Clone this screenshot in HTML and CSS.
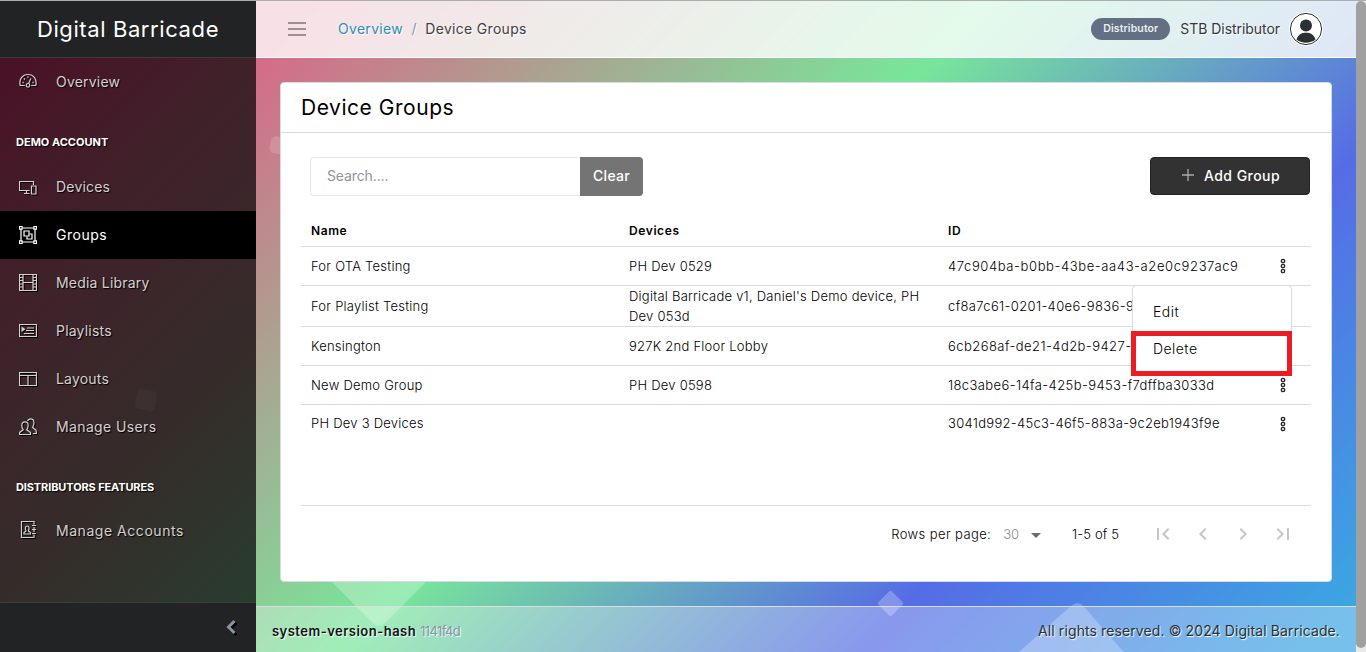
FILE: index.html
```html
<!DOCTYPE html>
<html lang="en">
<head>
<meta charset="utf-8">
<title>Device Groups</title>
<link rel="stylesheet" href="styles.css">
</head>
<body>
<div class="app">
  <div class="shapes">
    <span class="shape shape-a"></span>
    <span class="shape shape-b"></span>
    <span class="shape shape-c"></span>
    <span class="shape shape-d"></span>
  </div>

  <aside class="sidebar">
    <div class="brand">Digital Barricade</div>
    <nav class="nav">
      <a class="nav-item overview"><svg class="icon" viewBox="0 0 18 18"><path d="M5.800 13.500H1.200C-.3 7.200 3.500 2.500 9 2.500s9.300 4.700 7.800 11h-4.600"/><circle cx="9" cy="13.300" r="1.800"/><path d="M9.600 11.500l2.200-5"/><path class="dots" d="M3.500 10.500h1.200M4.800 7h1.200M8.400 5h1.200M13.500 10.500h1.200"/></svg><span>Overview</span></a>
      <div class="nav-title">DEMO ACCOUNT</div>
      <a class="nav-item"><svg class="icon" viewBox="0 0 18 18"><path d="M10.500 12.500h-10v-9h14v3.500M5 15.500h5.500M7.500 12.500v3"/><path d="M12.500 8h4.500v8h-4.500z"/></svg><span>Devices</span></a>
      <a class="nav-item active"><svg class="icon" viewBox="0 0 18 18"><path d="M3 2h12M3 16h12M2 3v12M16 3v12"/><path class="corner" d="M.5.5h2.600v2.600H.5zM14.900.5h2.600v2.600h-2.600zM.5 14.900h2.600v2.600H.5zM14.900 14.900h2.600v2.600h-2.600z"/><path d="M5 5h5v5H5z"/><path d="M10.500 8H13v5H8v-2.500"/></svg><span>Groups</span></a>
      <a class="nav-item"><svg class="icon" viewBox="0 0 18 18"><path d="M.5.5h17v16H.5zM4 .5v16M14 .5v16M4 8.500h10M.5 3.500H4M.5 6.500H4M.5 10H4M.5 13H4M14 3.500h3.500M14 6.500h3.500M14 10h3.500M14 13h3.500"/></svg><span>Media Library</span></a>
      <a class="nav-item playlists"><svg class="icon" viewBox="0 0 18 18"><path d="M.5 2.500h17v12H.5zM8 6h7M7 8.500h8M5 11.500h10"/><path class="solid" d="M2.500 4.500l4 2.700-4 2.700z"/></svg><span>Playlists</span></a>
      <a class="nav-item"><svg class="icon" viewBox="0 0 18 18"><path d="M.5 2.500h17v13H.5zM.5 5.500h17M9 5.500v10"/></svg><span>Layouts</span></a>
      <a class="nav-item users"><svg class="icon" viewBox="0 0 18 18"><path d="M.5 16.500v-2l3.700-2.700c-1.400-2-1.700-3.600-1.300-5.600.5-3.200 5.600-3.200 6.100 0 .4 2 .1 3.600-1.300 5.600l3.800 2.700v2z"/><path d="M8.500 3C9.500 0 14.300.3 14.800 3.500c.4 2.200 0 4-1.200 5.800l3.400 2.900.5 3.300h-3.500"/></svg><span>Manage Users</span></a>
      <div class="nav-title second">DISTRIBUTORS FEATURES</div>
      <a class="nav-item accounts"><svg class="icon" viewBox="0 0 18 18"><path d="M15 3.500V.5H2.500v16H15v-3M15 6v5M13 4.500h4M13 8.500h4M13 12.500h4"/><path d="M5 13v-1.500l2-1.500C5.800 7 6.300 5 8.200 5s2.400 2 1.200 5l2 1.500V13z"/></svg><span>Manage Accounts</span></a>
    </nav>
    <div class="minimizer"><svg viewBox="0 0 12 16"><path d="M9.500 2L3.500 8l6 6"/></svg></div>
  </aside>

  <div class="main">
    <header class="topbar">
      <svg class="burger" viewBox="0 0 18 14"><path d="M0 1h18M0 7h18M0 13h18"/></svg>
      <div class="crumbs"><a>Overview</a><i>/</i><span>Device Groups</span></div>
      <div class="account">
        <b class="badge">Distributor</b>
        <span class="account-name">STB Distributor</span>
        <svg class="avatar" viewBox="0 0 34 34"><circle cx="17" cy="17" r="17" fill="#fff"/><circle cx="17" cy="17" r="15.600" fill="#fff" stroke="#2b3035"/><circle cx="17" cy="13.500" r="6" fill="#2b3035"/><path d="M7.500 27.500C9 22.500 12.500 20.700 17 20.700s8 1.800 9.500 6.800C21.500 31.700 12.500 31.700 7.500 27.500z" fill="#2b3035"/></svg>
      </div>
    </header>

    <section class="card">
      <h1 class="card-title">Device Groups</h1>
      <div class="card-body">
        <div class="toolbar">
          <div class="search"><div class="search-input">Search....</div><div class="clear">Clear</div></div>
          <div class="add"><svg viewBox="0 0 12 12"><path d="M6 0v12M0 6h12"/></svg><span>Add Group</span></div>
        </div>
        <div class="table">
          <div class="row head"><span>Name</span><span>Devices</span><span>ID</span></div>
          <div class="row">
            <span>For OTA Testing</span><span>PH Dev 0529</span><span class="id1">47c904ba-b0bb-43be-aa43-a2e0c9237ac9</span>
            <svg class="kebab" viewBox="0 0 6 16"><circle cx="3" cy="3" r="1.700"/><circle cx="3" cy="8" r="1.700"/><circle cx="3" cy="13" r="1.700"/></svg>
            <div class="menu"><span>Edit</span><span>Delete</span></div>
            <div class="highlight"></div>
          </div>
          <div class="row tall"><span>For Playlist Testing</span><span class="devices">Digital Barricade v1, Daniel's Demo device, PH<br>Dev 053d</span><span class="id2">cf8a7c61-0201-40e6-9836-9</span></div>
          <div class="row"><span>Kensington</span><span>927K 2nd Floor Lobby</span><span class="id3">6cb268af-de21-4d2b-9427-</span></div>
          <div class="row"><span>New Demo Group</span><span>PH Dev 0598</span><span class="id4">18c3abe6-14fa-425b-9453-f7dffba3033d</span>
            <svg class="kebab" viewBox="0 0 6 16"><circle cx="3" cy="3" r="1.700"/><circle cx="3" cy="8" r="1.700"/><circle cx="3" cy="13" r="1.700"/></svg></div>
          <div class="row last"><span>PH Dev 3 Devices</span><span></span><span class="id5">3041d992-45c3-46f5-883a-9c2eb1943f9e</span>
            <svg class="kebab" viewBox="0 0 6 16"><circle cx="3" cy="3" r="1.700"/><circle cx="3" cy="8" r="1.700"/><circle cx="3" cy="13" r="1.700"/></svg></div>
        </div>
        <div class="pager">
          <span class="rows-label">Rows per page:</span>
          <span class="rows-value">30</span>
          <svg class="caret" viewBox="0 0 10 5"><path d="M0 0h10L5 5z"/></svg>
          <span class="range">1-5 of 5</span>
          <svg class="page-icon" viewBox="0 0 24 24"><path d="M18.410 16.590L13.820 12l4.590-4.590L17 6l-6 6 6 6zM6 6h2v12H6z"/></svg>
          <svg class="page-icon" viewBox="0 0 24 24"><path d="M15.410 7.410L14 6l-6 6 6 6 1.410-1.410L10.830 12z"/></svg>
          <svg class="page-icon" viewBox="0 0 24 24"><path d="M10 6L8.590 7.410 13.170 12l-4.580 4.590L10 18l6-6z"/></svg>
          <svg class="page-icon" viewBox="0 0 24 24"><path d="M5.590 7.410L10.180 12l-4.590 4.590L7 18l6-6-6-6zM16 6h2v12h-2z"/></svg>
        </div>
      </div>
    </section>

    <footer class="footer">
      <div><b class="hash-label">system-version-hash</b> <span class="hash">1141f4d</span></div>
      <div class="rights">All rights reserved. © 2024 Digital Barricade.</div>
    </footer>
  </div>

  <div class="scrollbar"><div class="thumb"></div></div>
</div>
</body>
</html>
```
FILE: styles.css
```css
* { box-sizing: border-box; }
body {
  margin: 0;
  font: 400 14px/20px Inter, "Open Sans", sans-serif;
  color: #000;
  overflow: hidden;
}
svg { display: block; flex: none; }

.app {
  position: relative;
  display: flex;
  width: 1366px;
  height: 652px;
  padding-top: 1px;
  overflow: hidden;
  background: linear-gradient(135deg, #d66a88 222px, #78e69a 700px, #566ce6 1068px, #3ca5e2 1379px);
}
.app::before {
  content: "";
  position: absolute;
  inset: 0 0 auto;
  height: 1px;
  background: #abaeaf;
  z-index: 3;
}

/* floating background squares */
.shapes { position: absolute; inset: 0; }
.shape { position: absolute; background: rgba(255, 255, 255, .25); border-radius: 4px; }
.shape-a { left: 270px; top: 137px; width: 17px; height: 17px; border-radius: 5px; transform: rotate(12deg); background: rgba(255, 255, 255, .15); }
.shape-b { left: 333px; top: 537px; width: 92px; height: 92px; transform: translateY(-19px) rotate(45deg); border-radius: 8px; }
.shape-c { left: 881px; top: 594px; width: 19px; height: 19px; transform: rotate(45deg); border-radius: 2px; }
.shape-d { left: 1078px; top: 600px; width: 120px; height: 120px; transform-origin: 0 0; transform: rotate(48.700deg); border-radius: 8px; }

.sidebar {
  position: relative;
  display: flex;
  flex-direction: column;
  width: 256px;
  color: #d4d1d1;
  text-shadow: 1px 1px 1px #000;
}
.brand {
  height: 57px;
  padding-top: 13px;
  border-bottom: 1px solid #3a3c3d;
  background: #212324;
  color: #fff;
  font-size: 22px;
  line-height: 30px;
  letter-spacing: .6px;
  text-align: center;
  text-shadow: none;
}
.nav {
  position: relative;
  flex: 1;
  background: linear-gradient(135deg, #4a1126 0, #40212a 180px, #352c2a 381px, #293c2f 566px);
}
.nav::before {
  content: "";
  position: absolute;
  left: 136px;
  top: 332px;
  width: 20px;
  height: 20px;
  border-radius: 4px;
  background: rgba(255, 255, 255, .03);
  transform: rotate(11deg);
}
.nav-item {
  position: relative;
  display: flex;
  align-items: center;
  gap: 18px;
  height: 48px;
  padding: 0 0 1px 19px;
  letter-spacing: .2px;
}
.nav-item.overview, .nav-item.accounts { padding-bottom: 0; }
.nav-item.active { background: #000; color: #fff; letter-spacing: .5px; }
.nav-item.playlists { letter-spacing: .2px; }
.nav-item.users { letter-spacing: .37px; }
.nav-item.accounts { letter-spacing: .54px; }
.nav-title {
  height: 57px;
  padding: 26px 16px 0;
  color: #fff;
  font-size: 11px;
  font-weight: 700;
}
.nav-title.second { height: 56px; letter-spacing: -.12px; }
.icon {
  width: 18px;
  height: 18px;
  margin-right: 1px;
  fill: none;
  stroke: currentColor;
  stroke-width: 1.200;
  filter: drop-shadow(1.500px 1.500px .3px #000);
}
.overview .icon, .accounts .icon { margin-top: -2px; }
.icon .dots { stroke-width: 1.300; }
.icon .corner { fill: #000; }
.icon .solid { fill: currentColor; stroke: none; }
.minimizer {
  display: flex;
  justify-content: flex-end;
  align-items: center;
  height: 50px;
  padding: 0 19px 1px 0;
  border-top: 1px solid #3a3c3d;
  background: #212324;
}
.minimizer svg {
  width: 12px;
  height: 16px;
  fill: none;
  stroke: #8a93a2;
  stroke-width: 3;
  filter: drop-shadow(2px 2px .5px #000);
}

.main {
  position: relative;
  display: flex;
  flex-direction: column;
  width: 1100px;
}
.topbar {
  display: flex;
  align-items: center;
  height: 57px;
  padding: 0 33px 0 32px;
  border-bottom: 1px solid #fff;
  background: rgba(255, 255, 255, .8);
}
.burger { width: 18px; height: 14px; fill: none; stroke: #82767f; stroke-width: 1.600; }
.crumbs {
  display: flex;
  gap: 8.500px;
  margin-left: 32px;
  letter-spacing: .3px;
  color: #3c4044;
  text-shadow: 1px 1px 1px #fff;
}
.crumbs a { color: #2a8fb3; }
.crumbs i { font-style: normal; color: #8a93a2; }
.account { display: flex; align-items: center; margin-left: auto; text-shadow: 1px 1px 1px #fff; }
.badge {
  width: 79px;
  height: 22px;
  border-radius: 11px;
  background: #636f83;
  color: #ebedef;
  font-size: 10.500px;
  font-weight: 600;
  line-height: 21px;
  letter-spacing: .1px;
  text-align: center;
  text-shadow: none;
}
.account-name { margin: 0 9px 0 10px; letter-spacing: -.05px; color: #34383c; }
.avatar { width: 34px; height: 34px; }

.card {
  height: 500px;
  margin: 24px;
  border: 1px solid #d8dbe0;
  border-radius: 4px;
  background: #fff;
}
.card-title {
  height: 50px;
  margin: 0;
  padding: 10px 20px;
  border-bottom: 1px solid #d8dbe0;
  font-size: 21px;
  font-weight: 400;
  line-height: 30px;
  letter-spacing: .54px;
}
.card-body { padding: 24px 20px 0; }
.toolbar { display: flex; justify-content: space-between; height: 39px; padding: 0 1px 0 9px; }
.search { display: flex; width: 333px; line-height: 38px; }
.search-input {
  width: 270px;
  padding-left: 16px;
  border: 1px solid #e6e8eb;
  border-right: 0;
  border-radius: 4px 0 0 4px;
  color: #8e959f;
  letter-spacing: -.12px;
  line-height: 36px;
}
.clear {
  width: 63px;
  border-radius: 0 4px 4px 0;
  background: #747474;
  color: #fff;
  font-weight: 500;
  letter-spacing: .3px;
  text-align: center;
}
.add {
  display: flex;
  align-items: center;
  justify-content: center;
  gap: 10px;
  width: 160px;
  height: 38px;
  padding-left: 2px;
  border: 1px solid #222;
  border-radius: 4px;
  background: #323232;
  color: #fff;
  font-weight: 500;
  letter-spacing: .44px;
}
.add svg { width: 12px; height: 12px; margin-top: -2px; stroke: #aaa; stroke-width: 1.300; }

.table { height: 310px; padding-top: 19px; border-bottom: 1px solid #dcdcdc; font-size: 13px; }
.row {
  position: relative;
  display: grid;
  grid-template-columns: 318px 319px 1fr;
  align-items: center;
  height: 39px;
  padding: 0 0 1px 10px;
  border-bottom: 1px solid #dcdcdc;
  font-weight: 350;
  letter-spacing: .24px;
}
.row.head { height: 32px; padding-bottom: 0; font-size: 12px; font-weight: 600; letter-spacing: .6px; }
.row.tall { height: 41px; padding-bottom: 2px; }
.row.last { height: 38px; padding-bottom: 2px; border: 0; }
.devices { white-space: nowrap; }
.id1 { letter-spacing: .61px; }
.id2 { letter-spacing: .36px; }
.id3 { letter-spacing: .44px; }
.id4 { letter-spacing: .4px; }
.id5 { letter-spacing: .3px; }
.kebab {
  position: absolute;
  right: 25px;
  top: 11px;
  width: 6px;
  height: 16px;
  fill: #fff;
  stroke: #222;
  stroke-width: 1.300;
}
/* row action menu, opened over the rows below */
.menu {
  position: absolute;
  z-index: 1;
  right: 19px;
  top: 38px;
  display: flex;
  flex-direction: column;
  gap: 17px;
  width: 160px;
  height: 91px;
  padding: 16px 20px;
  border: 1px solid #d8dbe0;
  border-radius: 4px;
  background: #fff;
  font-size: 14px;
  letter-spacing: .45px;
}
.highlight {
  position: absolute;
  z-index: 2;
  right: 19px;
  top: 84px;
  width: 161px;
  height: 45px;
  border: 5px solid #ed1c24;
}

.pager {
  display: flex;
  align-items: center;
  justify-content: flex-end;
  height: 56px;
  padding-right: 16px;
  font-size: 13px;
  font-weight: 350;
}
.rows-label { letter-spacing: .4px; }
.rows-value { margin-left: 12px; color: #8c8c8c; }
.caret { width: 10px; height: 5px; margin: 2px 31px 0 12px; fill: #6b6b6b; }
.range { margin-right: 32px; letter-spacing: .12px; }
.page-icon { width: 24px; height: 24px; fill: #c6c6c6; }
.page-icon + .page-icon { margin-left: 16px; }

.footer {
  display: flex;
  align-items: center;
  justify-content: space-between;
  height: 46px;
  padding: 3px 16px 0;
  border-top: 1px solid #dcdde0;
  background: rgba(255, 255, 255, .3);
  text-shadow: 1px 1px 1px #fff;
}
.hash-label { font-size: 13px; font-weight: 600; letter-spacing: .48px; color: #111; }
.hash { font-size: 13px; letter-spacing: -.62px; color: #8a93a2; }
.rights { letter-spacing: .1px; color: #2c3034; }

.scrollbar { position: relative; width: 10px; background: #e9e9e9; }
.thumb { height: 647px; border-radius: 5px; background: #a0a0a0; }
```
